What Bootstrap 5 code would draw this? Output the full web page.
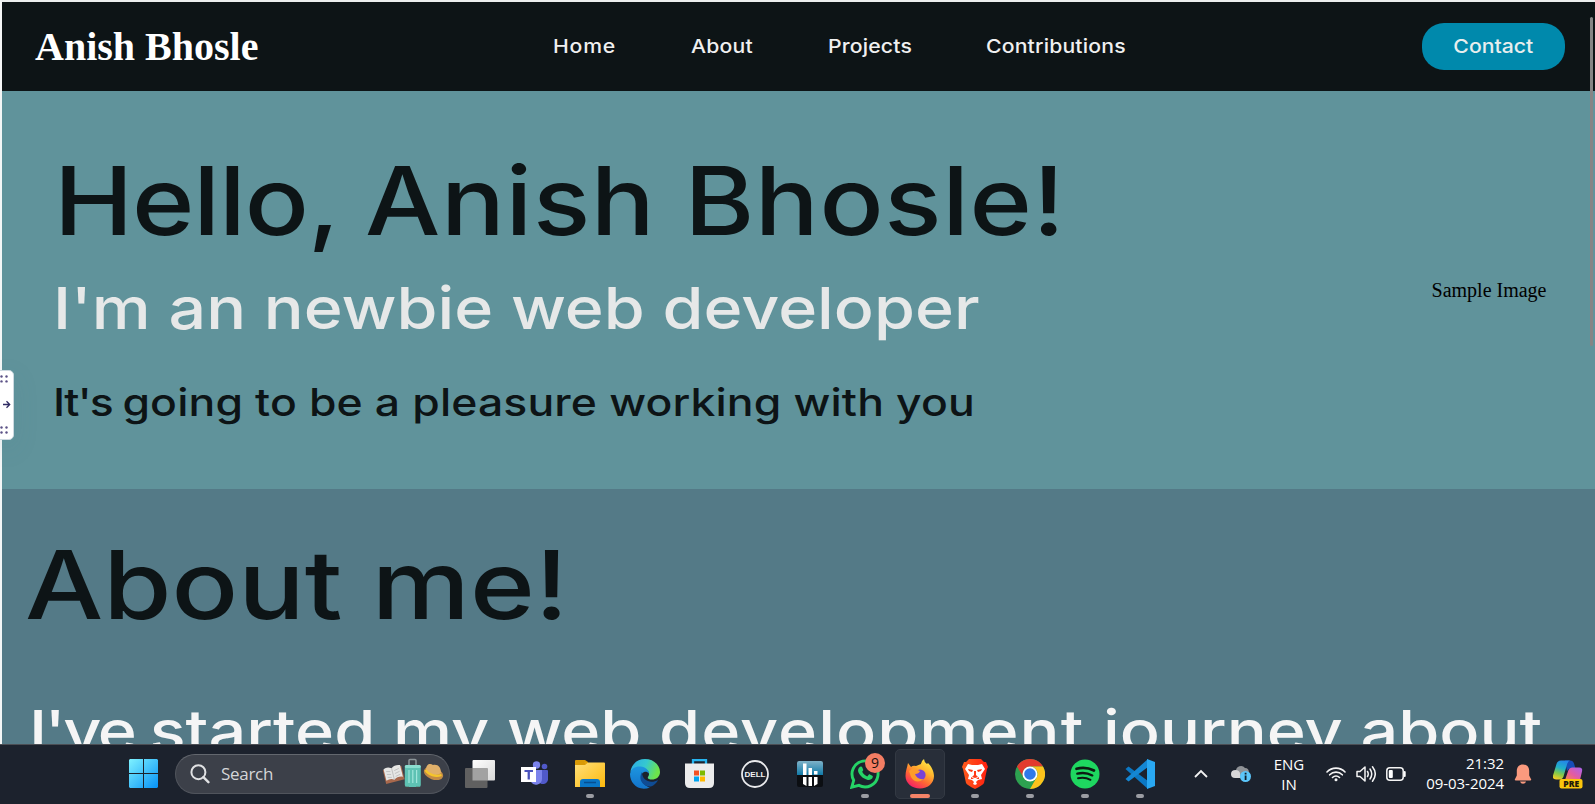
<!DOCTYPE html>
<html lang="en">
<head>
<meta charset="utf-8">
<title>Anish Bhosle</title>
<link rel="stylesheet" href="https://cdn.jsdelivr.net/npm/bootstrap@5.3.0/dist/css/bootstrap.min.css">
<style>
  body { font-family: Inter, sans-serif; font-weight: 500; background: #fff; }
  .screen { width: 1595px; height: 804px; }
  .page { border-left: 2px solid #f4f6f6; border-top: 2px solid #eceeee; min-height: 0; }
  .ink { color: #0d1416; }
  .topbar { height: 89px; background: #0d1416; padding: 0 30px 0 33px; }
  .brand-name { font: 700 40px/46px "Liberation Serif", serif; width: 223px; color: #fff; white-space: nowrap; }
  .links { margin-left: 295px; font-size: 19.3px; color: #f0f0f0; }
  .links a { color: inherit; text-decoration: none; width: 125px; letter-spacing: .15px; transform: scaleX(1.1); transform-origin: left; }
  .slot { width: 137.5px; }
  .slot-lg { width: 157.5px; }
  .pill { width: 143px; height: 47px; border-radius: 22px; background: #0089ac; color: #e8eeee; font-size: 19.3px; }
  .pill span { transform: scaleX(1.1); }
  .hero { height: 398px; background: #60939b; padding: 50px 48.5px 0 51px; }
  .wide { transform-origin: left center; white-space: nowrap; width: max-content; margin: 0; font-weight: 500; }
  .display-lg { font-size: 94.5px; line-height: 120px; }
  .display-md { font-size: 58px; line-height: 72px; }
  .display-sm { font-size: 38.2px; line-height: 48px; }
  .hello { transform: scaleX(1.125); letter-spacing: .55px; margin-left: 1px; }
  .hello span { letter-spacing: -1px; }
  .role { transform: scaleX(1.144); color: #e6e8e8; margin-top: 11px; }
  .tagline { transform: scaleX(1.165); letter-spacing: .12px; margin-top: 34px; }
  .tagline span { letter-spacing: -1.4px; }
  .alt-text { font: 400 20px/24px "Liberation Serif", serif; color: #000; margin-top: 137px; white-space: nowrap; }
  .about { background: #547a87; padding: 36px 0 0 23px; min-height: 0; }
  .about-title { transform: scaleX(1.169); }
  .about-text { transform: scaleX(1.147); color: #f5f5f5; margin: 50px 0 0 4px; }
  .about-text .tight { letter-spacing: -2.1px; }
  .about-text .loose { letter-spacing: .9px; }
  .thumb { left: 1590px; top: 17px; width: 3px; height: 329px; border-radius: 2px; background: #858585; }
  .handle { left: -2px; top: 370px; width: 16px; height: 70px; border-radius: 0 5px 5px 0; background: #fff; border: 1px solid #ccd9e0; box-shadow: 0 8px 24px rgba(70,125,145,.15); }
  .taskbar { height: 60px; background: #1c222d; border-top: 1px solid #4b4e54; padding: 0 0 2px 129px; color: #fff; font: 400 15px/20px "Open Sans", sans-serif; }
  .taskbar svg { display: block; flex: none; }
  .searchbox { width: 275px; height: 40px; margin-left: 17px; border-radius: 20px; background: #3c4049; border: 1px solid #50545c; border-top-color: #63676e; padding: 0 5px 0 14px; color: #d4d5d8; font-size: 17px; }
  .searchbox span { letter-spacing: -.3px; margin-left: 11px; }
  .app { width: 55px; height: 57px; position: relative; }
  .apps { margin-left: 2px; }
  .running::after { content: ""; position: absolute; bottom: 4px; left: 23.5px; width: 8px; height: 4px; border-radius: 2px; background: #9b9da3; }
  .current::before { content: ""; position: absolute; left: 2.5px; top: 4px; width: 50px; height: 50px; border-radius: 5px; background: #282e39; border: 1px solid #333943; }
  .current::after { left: 17.5px; width: 20px; background: #f58468; }
  .current svg { position: relative; }
  .count { left: 28px; top: 8px; width: 20px; height: 20px; border-radius: 50%; background: #f37d63; color: #17110f; font-size: 14px; }
  .lang { width: 40px; margin-left: 18px; }
  .clock { width: 90px; margin-left: 7px; letter-spacing: -.05px; margin-top: -2px; }
</style>
</head>
<body>
<div class="screen d-flex flex-column overflow-hidden position-relative">
  <div class="page flex-grow-1 d-flex flex-column overflow-hidden">
    <header class="topbar d-flex align-items-center flex-shrink-0">
      <div class="brand-name">Anish Bhosle</div>
      <nav class="links d-flex">
        <div class="slot"><a class="d-block" href="#" style="letter-spacing:.7px">Home</a></div>
        <div class="slot"><a class="d-block" href="#">About</a></div>
        <div class="slot-lg"><a class="d-block" href="#">Projects</a></div>
        <div class="slot"><a class="d-block" href="#">Contributions</a></div>
      </nav>
      <a class="pill ms-auto d-flex align-items-center justify-content-center text-decoration-none" href="#"><span>Contact</span></a>
    </header>
    <section class="hero d-flex justify-content-between flex-shrink-0">
      <div>
        <h1 class="wide display-lg hello ink"><span>Hello, </span>Anish Bhosle!</h1>
        <h2 class="wide display-md role">I'm an newbie web developer</h2>
        <h3 class="wide display-sm tagline ink"><span>It's </span>going to be a pleasure working with you</h3>
      </div>
      <div class="alt-text">Sample Image</div>
    </section>
    <section class="about flex-grow-1">
      <h1 class="wide display-lg about-title ink">About me!</h1>
      <p class="wide display-md about-text"><span class="tight">I've </span>started my web <span class="loose">development </span>journey about</p>
    </section>
  </div>

  <footer class="taskbar d-flex align-items-center flex-shrink-0 position-relative">
    <svg width="29" height="29" viewBox="0 0 29 29"><defs><linearGradient id="win" gradientUnits="userSpaceOnUse" x1="0" y1="0" x2="29" y2="29"><stop stop-color="#7ff2ff"/><stop offset="1" stop-color="#0692f8"/></linearGradient></defs><path fill="url(#win)" d="M1 0h13v14H0V1zM15 0h13l1 1v13H15zM0 15h14v14H1l-1-1zM15 15h14v13l-1 1H15z"/></svg>
    <div class="searchbox d-flex align-items-center">
      <svg width="20" height="20" viewBox="0 0 20 20" fill="none" stroke="#e0e1e3" stroke-width="2"><circle cx="8.4" cy="8.2" r="7"/><path d="M13.4 13.2l5 5" stroke-width="2.4" stroke-linecap="round"/></svg>
      <span>Search</span>
      <svg class="ms-auto" width="62" height="32" viewBox="0 0 62 32">
        <g transform="rotate(-14 11 16)"><path fill="#a8684c" d="M2 10h19v14H2z"/><path fill="#e6e6e4" d="M3 9q4-2 8 1v12q-3-3-8-1zM11 10q4-3 9-1v12q-5-2-9 1z"/><path stroke="#b5b5b5" stroke-width=".7" fill="none" d="M5 12l4 1M5 15l4 1M5 18l4 1M13 13l5-1M13 16l5-1M13 19l5-1M11 10v12"/></g>
        <path d="M27 8V2.500q0-1 1-1h5q1 0 1 1V8" stroke="#8b9498" stroke-width="1.500" fill="none"/><rect x="22.800" y="7" width="16" height="22" rx="2" fill="#5ec2b3"/><rect x="22.800" y="7" width="16" height="3" rx="1.500" fill="#8adccf"/><path d="M27 12v13M30.800 12v13M34.600 12v13" stroke="#a1e5db" stroke-width="1.200"/><path d="M24 29.500h3M34 29.500h3" stroke="#444" stroke-width="1.500"/>
        <ellipse cx="51.500" cy="15.500" rx="10" ry="6" transform="rotate(20 51.500 15.500)" fill="#c38b45"/><path d="M44 12c0-6 4-7 7-5 5-1 8 2 8 8-5 4-13 1-15-3z" fill="#e0b06a"/><path d="M43.500 12c3 5 10 7 16 5" stroke="#f5c52b" stroke-width="2.200" fill="none"/>
      </svg>
    </div>

    <div class="apps d-flex">
      <div class="app d-flex align-items-center justify-content-center"><svg width="30" height="28" viewBox="0 0 30 28"><defs><linearGradient id="tvA" x2="1" y2="1"><stop stop-color="#fff"/><stop offset="1" stop-color="#d8d8d8"/></linearGradient></defs><rect x="7.500" width="22.500" height="20.500" rx="1" fill="url(#tvA)"/><rect y="8" width="22.500" height="20" rx="1" fill="#606060"/><path fill="#a2a2a2" d="M7.500 8h15v12.500h-15z"/></svg></div>
      <div class="app d-flex align-items-center justify-content-center"><svg width="28" height="26" viewBox="0 0 28 26"><circle cx="23.500" cy="5.500" r="2.800" fill="#5059c9"/><circle cx="15.500" cy="4" r="3.700" fill="#7b83eb"/><path fill="#5059c9" d="M17 9h9q1 0 1 1v7a5 5 0 0 1-10 2z"/><path fill="#7b83eb" d="M10 9h11v9a6 6 0 0 1-11 3z"/><rect x="0" y="6" width="15" height="15" fill="#fff"/><path fill="#4b53bc" d="M3.500 9h8.500v2H8.900v7.500H6.600V11H3.500z"/></svg></div>
      <div class="app running d-flex align-items-center justify-content-center"><svg width="30" height="27" viewBox="0 0 30 27"><defs><linearGradient id="fol" x2="1" y2="1"><stop stop-color="#ffe07a"/><stop offset="1" stop-color="#fdb90c"/></linearGradient></defs><path fill="#d99a06" d="M0 1q0-1 1-1h9l3 2v6H0z"/><path fill="#e3a30c" d="M9 2h3l-1 3z"/><path fill="url(#fol)" d="M0 5h10l3-2.500h16q1 0 1 1V27H0z"/><path fill="#0a77c7" d="M5 27v-5q0-3 3-3h14q3 0 3 3v5z"/><path stroke="#064f91" stroke-width="1.500" d="M9 22.500h12"/></svg></div>
      <div class="app d-flex align-items-center justify-content-center"><svg width="30" height="30" viewBox="0 0 30 30"><defs><linearGradient id="edg" x2="1" y2=".3"><stop stop-color="#2ba9e8"/><stop offset=".55" stop-color="#35c8d0"/><stop offset="1" stop-color="#6de34b"/></linearGradient><linearGradient id="edb" x2="0" y2="1"><stop stop-color="#1d96e0"/><stop offset="1" stop-color="#1273ca"/></linearGradient></defs><path fill="url(#edg)" d="M.3 13C1.500 5 7.500 0 15 0c8.500 0 15 6 15 13 0 5-4 7.500-8 7.500-3 0-5-1-4-2.500C21 14 17 9 11 9 6 9 2 11 .3 13z"/><path fill="url(#edb)" d="M0 15C1 9 6 7 10.500 7.500c5 .5 8.500 3.500 8.500 7-3-4-8.500-1-8 4 .5 6 6 9.500 9 10C8 33 0 24 0 15z"/><path fill="#0f4c94" d="M12 13c-5 9 3 15 9 14.500 3-1 6-4 7-6.500-7 4-16 1-16-8z"/></svg></div>
      <div class="app d-flex align-items-center justify-content-center"><svg width="29" height="29" viewBox="0 0 29 29"><path d="M8 6V1.200h13V6" stroke="#27b4ef" stroke-width="2.300" fill="none"/><path fill="#ececec" d="M0 4.500h29V24q0 5-5 5H5q-5 0-5-5z"/><path fill="#f25022" d="M9 11.500h5v5H9z"/><path fill="#7fba00" d="M15 11.500h5v5h-5z"/><path fill="#00a4ef" d="M9 17.500h5v5H9z"/><path fill="#ffb900" d="M15 17.500h5v5h-5z"/></svg></div>
      <div class="app d-flex align-items-center justify-content-center"><svg width="28" height="28" viewBox="0 0 28 28"><circle cx="14" cy="14" r="13" fill="none" stroke="#e9eaec" stroke-width="1.800"/><text x="14" y="17" text-anchor="middle" font-family="Liberation Sans" font-weight="700" font-size="8" textLength="21" lengthAdjust="spacingAndGlyphs" fill="#f2f2f2">DELL</text></svg></div>
      <div class="app d-flex align-items-center justify-content-center"><svg width="28" height="28" viewBox="0 0 28 28"><defs><linearGradient id="bar" x2="0" y2="1"><stop stop-color="#7fb2c8"/><stop offset="1" stop-color="#107aa8"/></linearGradient></defs><rect x="1" y="1" width="26" height="26" rx="2" fill="#0b0e12"/><path fill="url(#bar)" d="M1 3q0-2 2-2h22q2 0 2 2v12H1z"/><path fill="#fff" d="M7 3.500h3.500V15H7zM12.500 8H16v7h-3.500zM18 11h3.500v3.500H18zM7 17h3.500v9L7 24zM12.500 17H16v9h-3.500zM18 17h3.500v7L18 26z"/></svg></div>
      <div class="app running d-flex align-items-center justify-content-center"><svg width="30" height="30" viewBox="0 0 30 30"><path d="M1.800 28.200l1.900-6.900A13 13 0 1 1 8.900 26.400z" fill="none" stroke="#25d366" stroke-width="2.900"/><path fill="#25d366" d="M10.200 7.800c.8-.5 1.700-.3 2 .5l1 2.500c.2.500-.1 1-1 2 1 2.200 2.800 3.700 5 4.700l1.500-1.800c.3-.4.8-.4 1.200-.2l2.400 1.200c.6.3.6.7.4 1.600-.6 2-3 3.100-5 2.600-4.800-1.100-8.600-4.800-9.600-8.600-.4-1.800.6-3.700 2.100-4.500z"/></svg><span class="count position-absolute d-flex align-items-center justify-content-center">9</span></div>
      <div class="app running current d-flex align-items-center justify-content-center"><svg width="29" height="30" viewBox="0 0 29 30"><defs><linearGradient id="ffx" x1=".8" y1="0" x2=".2" y2="1"><stop stop-color="#fff04a"/><stop offset=".35" stop-color="#ffb52e"/><stop offset=".65" stop-color="#ff6634"/><stop offset="1" stop-color="#f5156c"/></linearGradient></defs><path fill="url(#ffx)" d="M3 4l3 4q2-2 5-1l5-2q0-3 3-5 0 3 3 5l1-1c3 3 6 8 6 13 0 7-6 12.500-14 12.500S.5 24 .5 17C.5 12 2 9 3 4z"/><circle cx="15" cy="16" r="5.600" fill="#7a42d6"/><path fill="#ff9d2b" d="M4 12l4-3 7 3q-1 3-5 3 2 6 9 5-8 6-13-2z"/></svg></div>
      <div class="app running d-flex align-items-center justify-content-center"><svg width="26" height="30" viewBox="0 0 26 30"><defs><linearGradient id="brv" x2="1"><stop stop-color="#ff5b1c"/><stop offset="1" stop-color="#ff2010"/></linearGradient></defs><path fill="url(#brv)" d="M7 0h12l3 3 2 0 2 5-1 2-3 14q-1 2-9 6-8-4-9-6L1 10 0 8l2-5h2z"/><path fill="#fff" d="M6 5l4 1h6l4-1 3 5-4 6 1 4-4 1-2 2 1 2-2 1-2-1 1-2-2-2-4-1 1-4-4-6z"/><path fill="#ff3b17" d="M6 10l5 1-1 2-3-1zM20 10l-5 1 1 2 3-1zM12 12h2v4l2 2-3 1-3-1 2-2zM9 18l3 2-3 0zM17 18l-3 2 3 0z"/></svg></div>
      <div class="app running d-flex align-items-center justify-content-center"><svg width="30" height="30" viewBox="0 0 30 30"><circle cx="15" cy="15" r="15" fill="#2da150"/><path fill="#e23b2e" d="M2 7.500A15 15 0 0 1 28 7.500H15a7.500 7.500 0 0 0-6.500 11z"/><path fill="#fcc31c" d="M28 7.500A15 15 0 0 1 15 30l6.500-11.200A7.500 7.500 0 0 0 15 7.500z"/><circle cx="15" cy="15" r="7.500" fill="#fff"/><circle cx="15" cy="15" r="5.800" fill="#3079ea"/></svg></div>
      <div class="app running d-flex align-items-center justify-content-center"><svg width="30" height="30" viewBox="0 0 30 30"><circle cx="15" cy="15" r="14.500" fill="#1ed760"/><g fill="none" stroke="#0d1a12" stroke-linecap="round"><path stroke-width="2.700" d="M6.500 9.800q9-2.500 17.500 1.700"/><path stroke-width="2.300" d="M7.300 14.700q8-2 15 1.700"/><path stroke-width="1.900" d="M8 19.200q7-1.500 12.500 1.600"/></g></svg></div>
      <div class="app running d-flex align-items-center justify-content-center"><svg width="30" height="30" viewBox="0 0 30 30"><path fill="#0b78c4" d="M.5 10l3-2.500L23 22v8z"/><path fill="#1487d4" d="M.5 20l3 2.500L23 8V0z"/><path fill="#29a8f2" d="M22 0l8 3v24l-8 3z"/></svg></div>
    </div>

    <svg style="margin-left:27px" width="14" height="10" viewBox="0 0 14 10" fill="none" stroke="#f2f2f2" stroke-width="1.800"><path d="M1 8l6-6 6 6"/></svg>
    <svg style="margin-left:23px" width="20" height="19" viewBox="0 0 20 19"><path fill="#8f9296" d="M5 7a5 5 0 0 1 9-3q4 0 4 5l-8 5H4z"/><path fill="#d7d7d8" d="M0 10q0-4 4.500-4Q8 6 9 9v5H4q-4 0-4-4z"/><circle cx="14.500" cy="12.500" r="5.500" fill="#5bc6fa"/><path fill="#10202c" d="M13.700 8.800h1.800v1.800h-1.800zM13.700 11.500h1.800v4.500h-1.800z"/></svg>
    <div class="lang text-center">ENG<br>IN</div>
    <svg style="margin-left:17px" width="20" height="16" viewBox="0 0 20 16" fill="none" stroke="#f4f4f4" stroke-width="1.600" stroke-linecap="round"><path d="M1 6a12.500 12.500 0 0 1 18 0M3.700 8.800a8.700 8.700 0 0 1 12.600 0M6.500 11.500a5 5 0 0 1 7 0"/><circle cx="10" cy="13.800" r="1.500" fill="#f4f4f4" stroke="none"/></svg>
    <svg style="margin-left:10px" width="20" height="18" viewBox="0 0 20 18" fill="none" stroke="#f4f4f4" stroke-width="1.500" stroke-linecap="round" stroke-linejoin="round"><path d="M1 6.500h3L9 2v14l-5-4.500H1zM11.500 6.500q1.500 2.500 0 5M14 4q3.500 5 0 10M16.500 1.800q5.500 7.200 0 14.400"/></svg>
    <svg style="margin-left:10px" width="21" height="14" viewBox="0 0 21 14"><rect x=".8" y=".8" width="16.400" height="12.400" rx="3" fill="none" stroke="#f4f4f4" stroke-width="1.500"/><rect x="2.800" y="3" width="4" height="8" rx="1" fill="#fff"/><path d="M18.700 5v4" stroke="#fff" stroke-width="2" stroke-linecap="round"/></svg>
    <div class="clock text-end">21:32<br>09-03-2024</div>
    <svg style="margin-left:10px" width="18" height="20" viewBox="0 0 18 20" fill="#fa9a7e"><path d="M9 .5c4 0 6.200 2.700 6.200 6.500v4.500l2 4q.3 1-1 1H1.800q-1.300 0-1-1l2-4V7C2.800 3.200 5 .5 9 .5z"/><path d="M6 17.500h6q-.8 2.300-3 2.300t-3-2.300z"/></svg>
    <svg style="margin-left:21px;margin-top:2px" width="30" height="29" viewBox="0 0 30 29"><defs><linearGradient id="cpA" x1="0.600" y1="0" x2=".3" y2="1"><stop stop-color="#2487e8"/><stop offset=".4" stop-color="#21b1c8"/><stop offset=".7" stop-color="#81c94b"/><stop offset="1" stop-color="#f1cb25"/></linearGradient><linearGradient id="cpB" x1="1" y1="0" x2="0" y2="1"><stop stop-color="#a863ee"/><stop offset=".55" stop-color="#e45ba0"/><stop offset="1" stop-color="#fa8747"/></linearGradient></defs><path fill="#174db7" d="M12 .5h5q3 0 4 3l1.500 5H18q-3 0-4 3z"/><path fill="url(#cpA)" d="M8 .5h9q-2 .5-3 4l-3.500 12q-1 3-4 3H3q-4 0-3-4L3.500 4Q4.500.5 8 .5z"/><path fill="url(#cpB)" d="M19 7.500h7q4 0 3 4L27 20H12l3.500-10q1-2.500 3.500-2.500z"/><rect x="6.500" y="19" width="23" height="9.500" rx="2" fill="#fbc50c"/><text x="18.200" y="26.700" text-anchor="middle" font-family="Open Sans" font-weight="800" font-size="8.500" textLength="16" fill="#20190a">PRE</text></svg>
  </footer>

  <div class="thumb position-absolute"></div>
  <div class="handle position-absolute"><svg class="d-block" width="14" height="68" viewBox="0 0 14 68"><g fill="#5b5186"><circle cx="2.500" cy="5.500" r="1.200"/><circle cx="7.500" cy="5.500" r="1.200"/><circle cx="2.500" cy="10.400" r="1.200"/><circle cx="7.500" cy="10.400" r="1.200"/><circle cx="2.500" cy="56.500" r="1.200"/><circle cx="7.500" cy="56.500" r="1.200"/><circle cx="2.500" cy="61.500" r="1.200"/><circle cx="7.500" cy="61.500" r="1.200"/></g><path d="M4 33.500h6.500M7.500 30.300l3.200 3.200-3.200 3.200" fill="none" stroke="#2f2b63" stroke-width="1.300"/></svg></div>
</div>
<script src="https://cdn.jsdelivr.net/npm/bootstrap@5.3.0/dist/js/bootstrap.bundle.min.js"></script>
</body>
</html>
